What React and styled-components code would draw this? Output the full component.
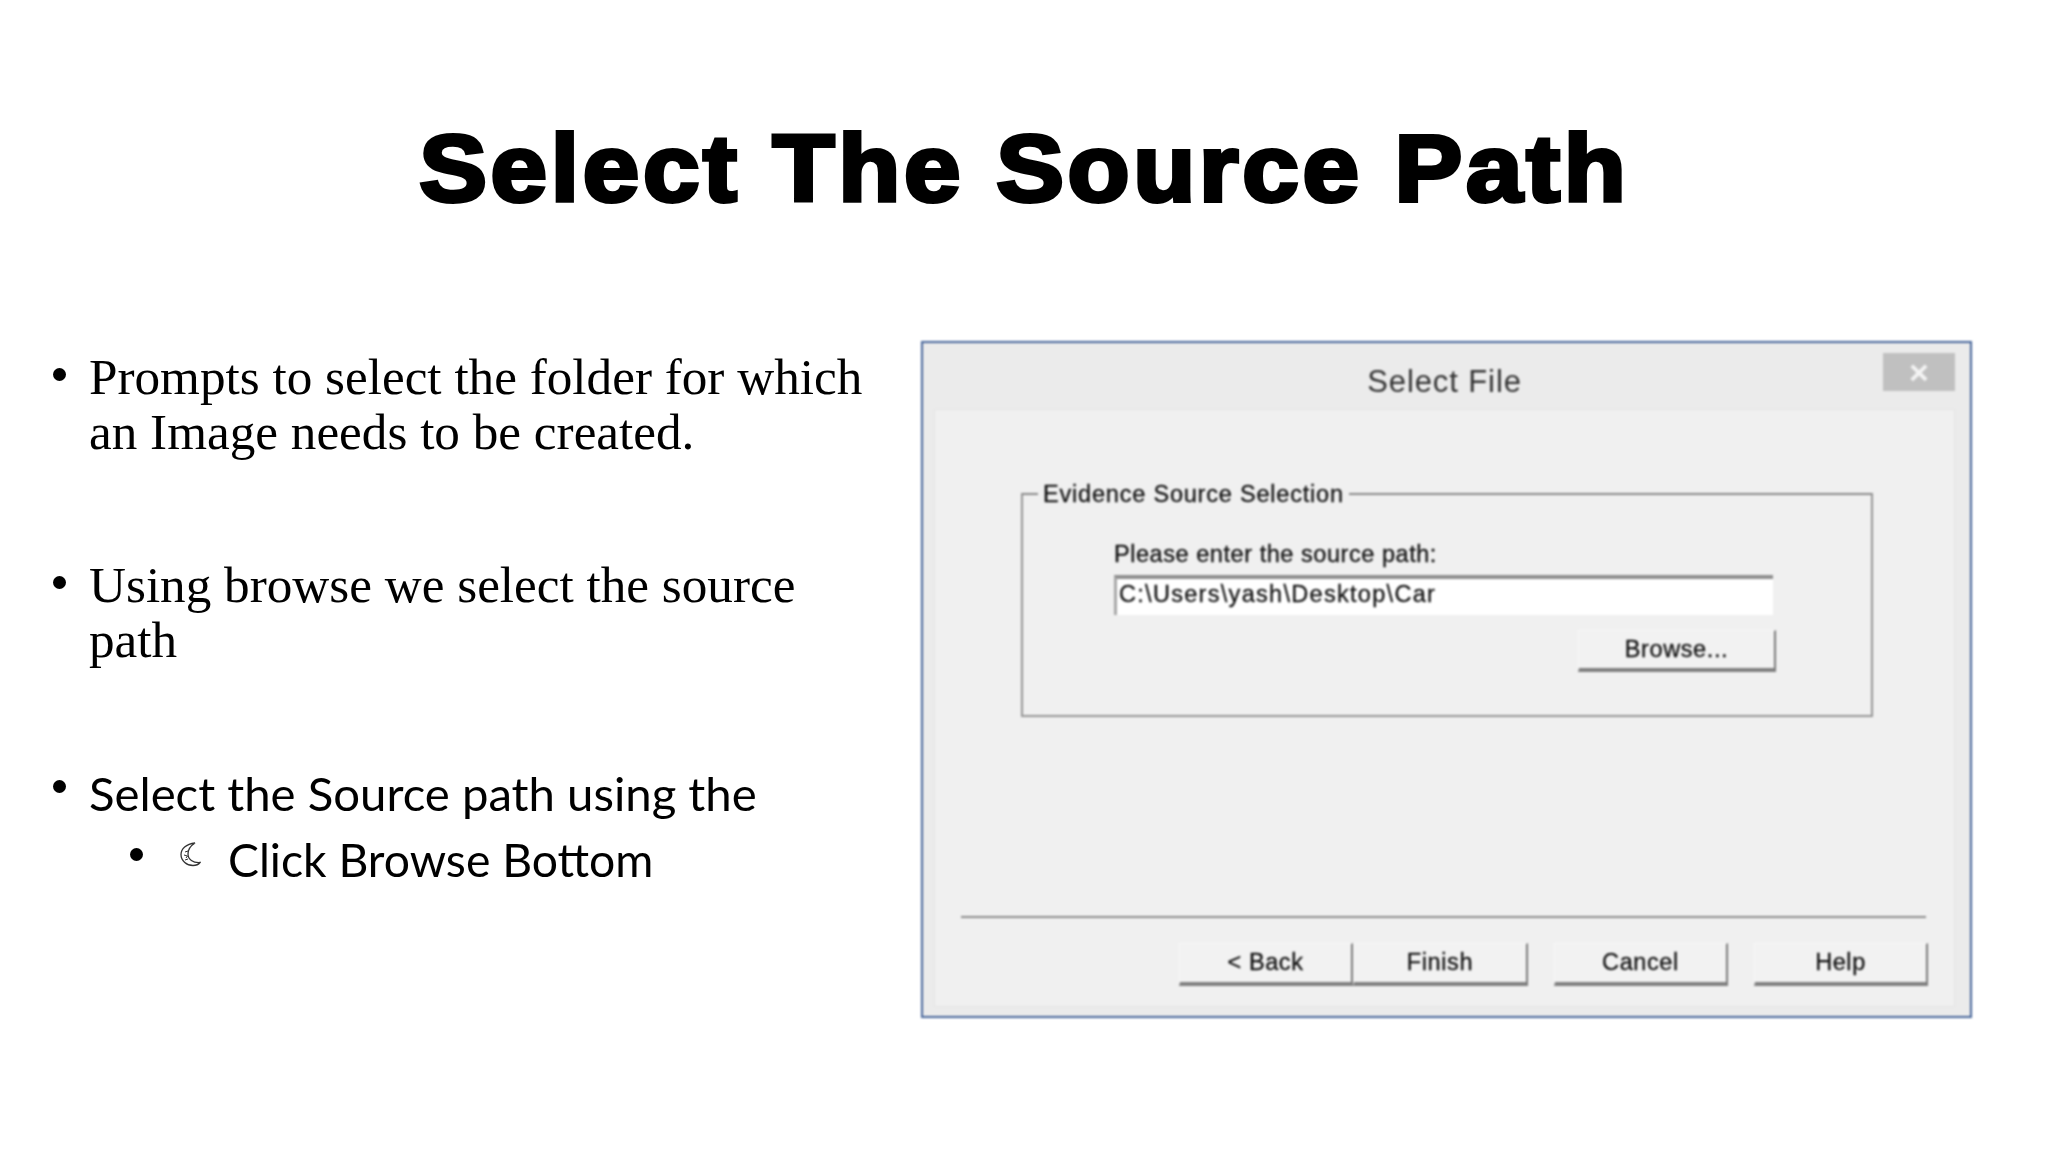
import React from "react";
import styled, { createGlobalStyle } from "styled-components";

const Global = createGlobalStyle`
  html, body { margin: 0; padding: 0; background: #fff; }
  #root { width: 2048px; height: 1152px; overflow: hidden; }
`;

const Slide = styled.main`
  width: 2048px;
  height: 1152px;
  background: #fff;
  display: flex;
  flex-direction: column;
  filter: blur(0.35px);
`;

const Title = styled.h1`
  margin: 0;
  padding-top: 114px;
  height: 228px;
  box-sizing: border-box;
  text-align: center;
  font: 700 94px/110px "Liberation Sans", Arial, sans-serif;
  letter-spacing: 3.45px;
  -webkit-text-stroke: 4px #000;
  color: #000;
`;

const TitleText = styled.span`
  display: inline-block;
  transform: scaleX(1.08);
`;

const Body = styled.div`
  display: flex;
  align-items: flex-start;
  padding-top: 113px;
`;

const Bullets = styled.ul`
  list-style: none;
  margin: 0;
  padding: 8px 0 0 52px;
  width: 869px;
  box-sizing: border-box;
  flex: none;
`;

const Bullet = styled.li`
  position: relative;
  padding-left: 37px;
  margin-bottom: ${(p) => p.$gap}px;
  color: #000;
  font: ${(p) =>
    p.$sans
      ? `400 47.3px/65px Lato, "Open Sans", sans-serif`
      : `400 51.2px/55px "Liberation Serif", "Times New Roman", serif`};
  &::before {
    content: "";
    position: absolute;
    left: 1px;
    top: ${(p) => (p.$sans ? 20 : 19)}px;
    width: 13px;
    height: 13px;
    border-radius: 50%;
    background: #000;
  }
`;

const SubRow = styled.div`
  position: relative;
  display: flex;
  align-items: center;
  gap: 27px;
  margin: 2px 0 0 79px;
  padding-left: 49px;
  font: 400 46.3px/65px Lato, "Open Sans", sans-serif;
  &::before {
    content: "";
    position: absolute;
    left: -1px;
    top: 21px;
    width: 13px;
    height: 13px;
    border-radius: 50%;
    background: #000;
  }
`;

const Moon = styled.svg`
  width: 21px;
  height: 25px;
  flex: none;
  margin-top: -11px;
`;

const Dialog = styled.section`
  width: 1051px;
  height: 677px;
  box-sizing: border-box;
  margin-left: 52px;
  border: 2px solid #46659a;
  background: #ebebeb;
  display: flex;
  flex-direction: column;
  padding: 8px 15px 9px 11px;
  filter: blur(0.9px);
`;

const TitleBar = styled.header`
  height: 58px;
  flex: none;
  display: flex;
  align-items: flex-start;
  justify-content: flex-end;
  position: relative;
  font: 400 31px/1 "Liberation Sans", Arial, sans-serif;
  color: #333;
`;

const Caption = styled.span`
  position: absolute;
  left: 0;
  right: 0;
  top: 15px;
  text-align: center;
  letter-spacing: 0.9px;
`;

const CloseBox = styled.span`
  width: 72px;
  height: 38px;
  margin-top: 2px;
  background: #c0c0c0;
  color: #f4f4f4;
  display: flex;
  align-items: center;
  justify-content: center;
  font: 700 34px/1 "Liberation Sans", sans-serif;
`;

const Panel = styled.div`
  flex: 1;
  background: #f0f0f0;
  border: 1px solid #e4e4e4;
  padding: 87px 0 0 86px;
  display: flex;
  flex-direction: column;
  font: 400 23.5px/1 "Liberation Sans", Arial, sans-serif;
  color: #111;
  -webkit-text-stroke: 0.3px #111;
`;

const Group = styled.fieldset`
  width: 852px;
  height: 238px;
  box-sizing: border-box;
  margin: -18px 0 0 0;
  padding: 0;
  border: 2px solid #969696;
  border-top-color: #8a8a8a;
  flex: none;
  min-width: 0;
`;

const Legend = styled.legend`
  padding: 0 5px;
  margin-left: 15px;
  letter-spacing: 0.8px;
  line-height: 30px;
`;

const GroupBody = styled.div`
  padding: 31px 0 0 91px;
`;

const FieldLabel = styled.label`
  display: block;
  line-height: 28px;
  letter-spacing: 0.55px;
`;

const PathBox = styled.div`
  margin-top: 7px;
  width: 659px;
  height: 40px;
  box-sizing: border-box;
  background: #fff;
  border-top: 4px solid #8f8f8f;
  border-left: 3px solid #a8a8a8;
  padding-left: 2px;
  line-height: 30px;
  letter-spacing: 1.3px;
`;

const BrowseRow = styled.div`
  display: flex;
  justify-content: flex-end;
  width: 662px;
  margin-top: 15px;
`;

const Btn = styled.button`
  width: ${(p) => p.$w}px;
  height: ${(p) => p.$h}px;
  box-sizing: border-box;
  padding: 0;
  margin: 0;
  background: #f2f2f2;
  border: none;
  border-right: 2px solid #7a7a7a;
  border-bottom: 4px solid #808080;
  border-top: 1px solid #f8f8f8;
  border-left: 1px solid #f8f8f8;
  font: 400 23.5px/1 "Liberation Sans", Arial, sans-serif;
  color: #111;
  -webkit-text-stroke: 0.3px #111;
  letter-spacing: 0.6px;
  margin-right: ${(p) => p.$mr || 0}px;
`;

const Spacer = styled.div`
  flex: 1;
`;

const Separator = styled.hr`
  margin: 0 0 0 -60px;
  width: 965px;
  height: 0;
  border: none;
  border-top: 2px solid #8c8c8c;
`;

const ButtonBar = styled.div`
  display: flex;
  margin: 25px 0 20px 158px;
`;

export default function App() {
  return (
    <>
      <Global />
      <Slide>
        <Title>
          <TitleText>Select The Source Path</TitleText>
        </Title>
        <Body>
          <Bullets>
            <Bullet $gap={98}>
              Prompts to select the folder for which
              <br />
              an Image needs to be created.
            </Bullet>
            <Bullet $gap={93}>
              Using browse we select the source
              <br />
              path
            </Bullet>
            <Bullet $sans $gap={0}>
              Select the Source path using the
            </Bullet>
            <SubRow>
              <Moon viewBox="0 0 21 25" fill="none" stroke="#333" strokeWidth="1.3">
                <path d="M15 1 C6 2 1 7 1 12.5 C1 19 7 23.5 13 23.5 C16 23.5 18.5 22.5 20 20.5 C13 21 8 17.5 8 12 C8 7.5 11 3.5 15 1 Z" />
                <path d="M5 10 L8 9 M4 13 L7.5 14 L6 16 M5 18 L8 17" strokeWidth="1" />
              </Moon>
              <span>Click Browse Bottom</span>
            </SubRow>
          </Bullets>
          <Dialog>
            <TitleBar>
              <Caption>Select File</Caption>
              <CloseBox>×</CloseBox>
            </TitleBar>
            <Panel>
              <Group>
                <Legend>Evidence Source Selection</Legend>
                <GroupBody>
                  <FieldLabel>Please enter the source path:</FieldLabel>
                  <PathBox>C:\Users\yash\Desktop\Car</PathBox>
                  <BrowseRow>
                    <Btn $w={198} $h={42}>Browse...</Btn>
                  </BrowseRow>
                </GroupBody>
              </Group>
              <Spacer />
              <Separator />
              <ButtonBar>
                <Btn $w={174} $h={43}>&lt; Back</Btn>
                <Btn $w={175} $h={43} $mr={26}>Finish</Btn>
                <Btn $w={174} $h={43} $mr={26}>Cancel</Btn>
                <Btn $w={174} $h={43}>Help</Btn>
              </ButtonBar>
            </Panel>
          </Dialog>
        </Body>
      </Slide>
    </>
  );
}
